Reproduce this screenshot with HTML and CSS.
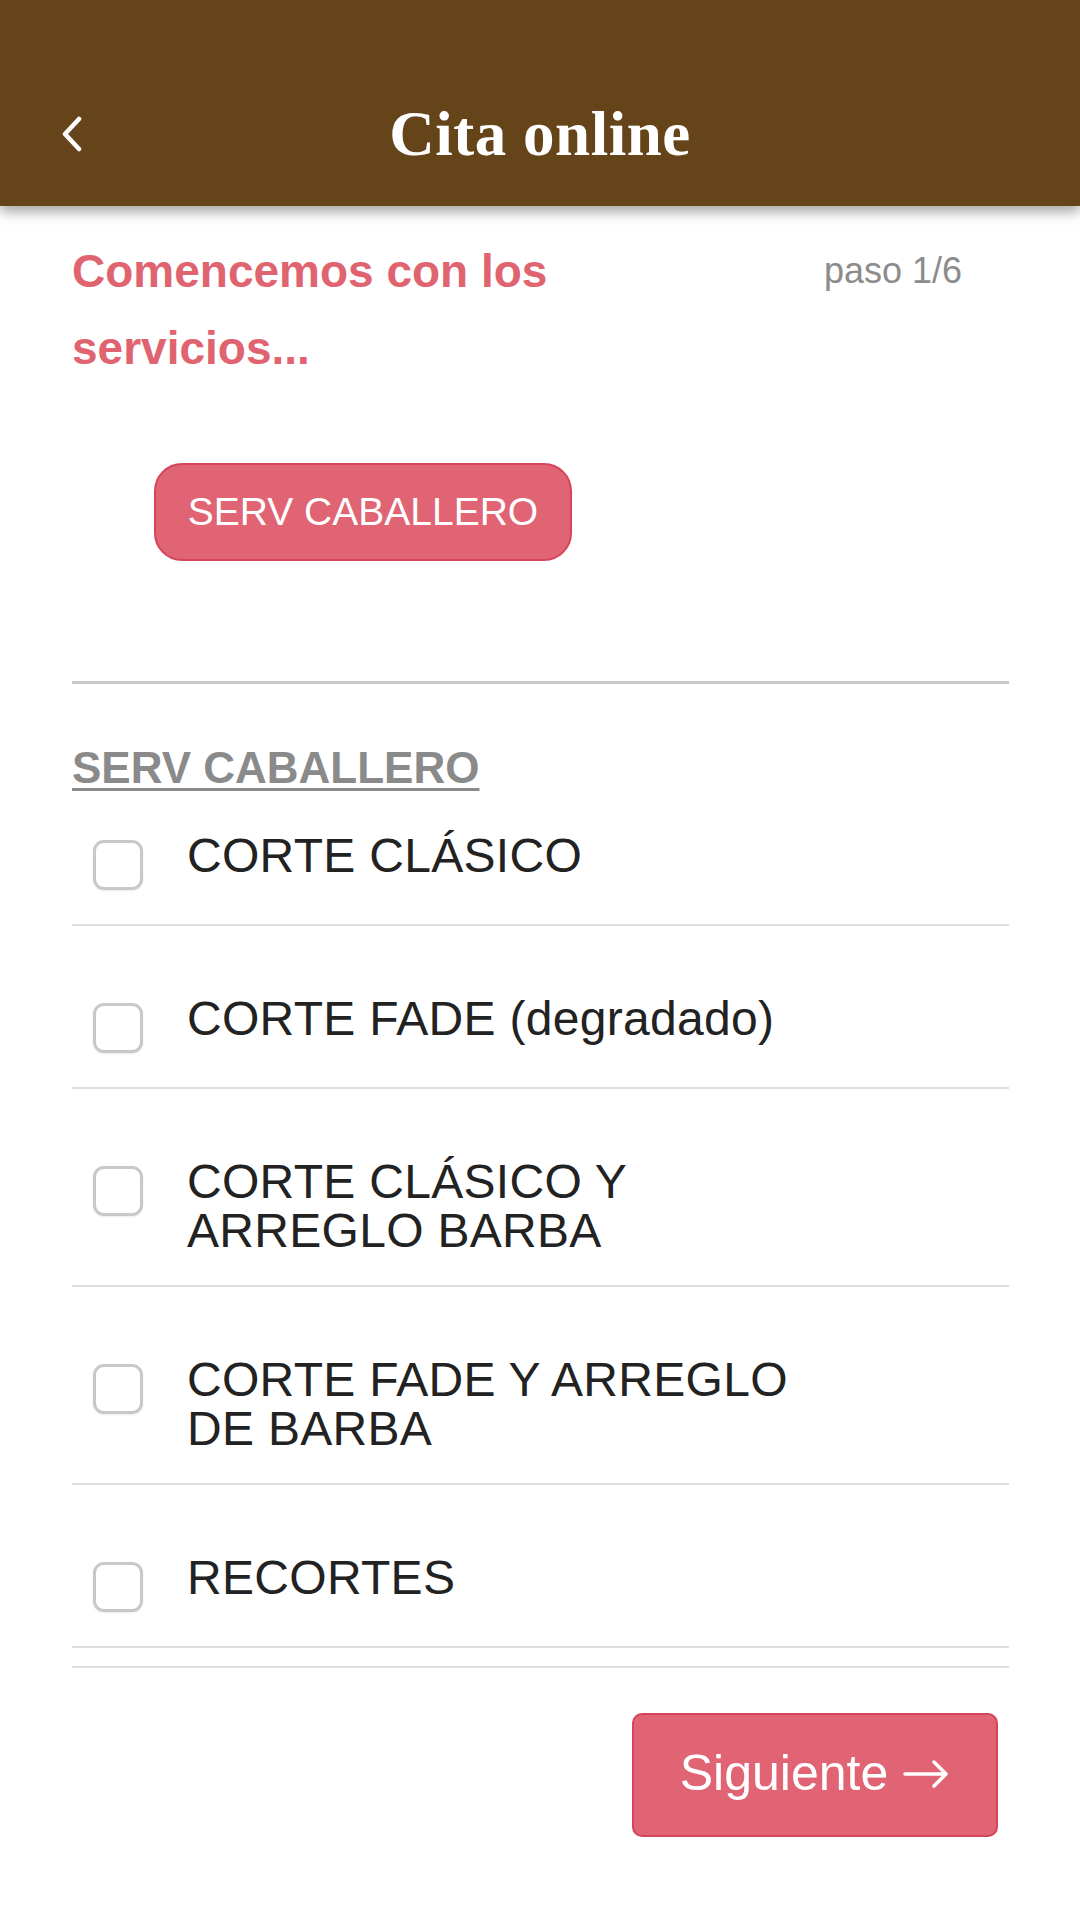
FILE: index.html
```html
<!DOCTYPE html>
<html lang="es">
<head>
<meta charset="utf-8">
<title>Cita online</title>
<link rel="stylesheet" href="styles.css">
</head>
<body>
<header class="topbar">
  <div class="back">
    <svg width="24" height="36" viewBox="0 0 24 36" aria-hidden="true"><polyline points="19,3 5,18 19,33" fill="none" stroke="#ffffff" stroke-width="4.5" stroke-linecap="round" stroke-linejoin="round"/></svg>
  </div>
  <h1 class="title">Cita online</h1>
  <div></div>
</header>
<main class="content">
  <div class="intro">
    <h2 class="lead">Comencemos con los servicios...</h2>
    <span class="step">paso 1/6</span>
  </div>
  <div class="cats">
    <button class="pill">SERV CABALLERO</button>
  </div>
  <hr class="divider">
  <h3 class="section">SERV CABALLERO</h3>
  <ul class="services">
    <li class="svc"><span class="box"></span><span class="name">CORTE CLÁSICO</span></li>
    <li class="svc"><span class="box"></span><span class="name">CORTE FADE (degradado)</span></li>
    <li class="svc"><span class="box"></span><span class="name">CORTE CLÁSICO Y<br>ARREGLO BARBA</span></li>
    <li class="svc"><span class="box"></span><span class="name">CORTE FADE Y ARREGLO<br>DE BARBA</span></li>
    <li class="svc"><span class="box"></span><span class="name">RECORTES</span></li>
  </ul>
  <div class="footer">
    <button class="next"><span>Siguiente</span><svg class="arrow" width="48" height="32" viewBox="0 0 48 32" aria-hidden="true"><path d="M3 16 H44 M32 4 L44 16 L32 28" fill="none" stroke="#ffffff" stroke-width="3.5" stroke-linecap="round" stroke-linejoin="round"/></svg></button>
  </div>
</main>
</body>
</html>
```
FILE: styles.css
```css
* { box-sizing: border-box; }
html, body { margin: 0; padding: 0; background: #ffffff; }
body { font-family: "Liberation Sans", Arial, sans-serif; width: 1080px; height: 1920px; overflow: hidden; }

.topbar {
  height: 206px;
  background: #65441a;
  display: grid;
  grid-template-columns: 1fr auto 1fr;
  align-items: center;
  padding-top: 62px;
  box-shadow: 0 6px 12px rgba(0,0,0,0.35);
  position: relative;
  z-index: 2;
}
.back { padding-left: 60px; display: flex; align-items: center; height: 36px; }
.back svg { display: block; }
.title {
  margin: 0;
  font-family: "Liberation Serif", "Times New Roman", serif;
  font-weight: bold;
  font-size: 63px;
  line-height: 62px;
  color: #ffffff;
  letter-spacing: 0.5px;
}

.content { padding: 0 71px 0 72px; }

.intro { display: flex; justify-content: space-between; align-items: flex-start; margin-top: 27px; }
.lead {
  margin: 0;
  max-width: 560px;
  font-size: 46px;
  line-height: 77px;
  font-weight: bold;
  color: #e06370;
}
.step { font-size: 36px; color: #8c8c8c; margin-right: 47px; margin-top: 18px; line-height: 40px; }

.cats { margin-top: 76px; padding-left: 82px; }
.pill {
  height: 98px;
  width: 418px;
  border: 2px solid #d4445a;
  border-radius: 28px;
  background: #e06473;
  color: #ffffff;
  font-family: "Liberation Sans", Arial, sans-serif;
  font-size: 39px;
  padding: 0;
}

.divider { margin: 120px 0 0; border: 0; height: 3px; background: #c8c8c8; }

.section {
  margin: 58px 0 0;
  font-size: 44px;
  line-height: 52px;
  font-weight: bold;
  color: #8a8a8a;
  text-decoration: underline;
  text-decoration-thickness: 3px;
  text-underline-offset: 5px;
}

.services { list-style: none; margin: 0; padding: 0; border-bottom: 2px solid #dedede; }
.svc {
  display: flex;
  align-items: flex-start;
  padding: 68px 0 30px;
  border-bottom: 2px solid #dedede;
}
.svc:first-child { padding-top: 37px; }
.svc:last-child { border-bottom: 0; }
.box {
  flex: none;
  width: 50px;
  height: 50px;
  margin: 9px 0 0 21px;
  border: 3px solid #c8c8c8;
  border-radius: 11px;
  background: #ffffff;
  box-shadow: 0 1px 2px rgba(0,0,0,0.08);
}
.name {
  margin-left: 44px;
  font-size: 48px;
  line-height: 49px;
  min-height: 63px;
  color: #222222;
  letter-spacing: 0.3px;
}

.footer {
  margin-top: 18px;
  border-top: 2px solid #dedede;
  padding-top: 45px;
  display: flex;
  justify-content: flex-end;
  padding-right: 11px;
}
.next {
  width: 366px;
  height: 124px;
  background: #e06473;
  border: 2px solid #d4445a;
  border-radius: 10px;
  color: #ffffff;
  font-family: "Liberation Sans", Arial, sans-serif;
  font-size: 50px;
  padding: 0 0 4px;
  display: flex;
  align-items: center;
  justify-content: center;
  gap: 14px;
}
.arrow { display: block; margin-top: 2px; }
```
